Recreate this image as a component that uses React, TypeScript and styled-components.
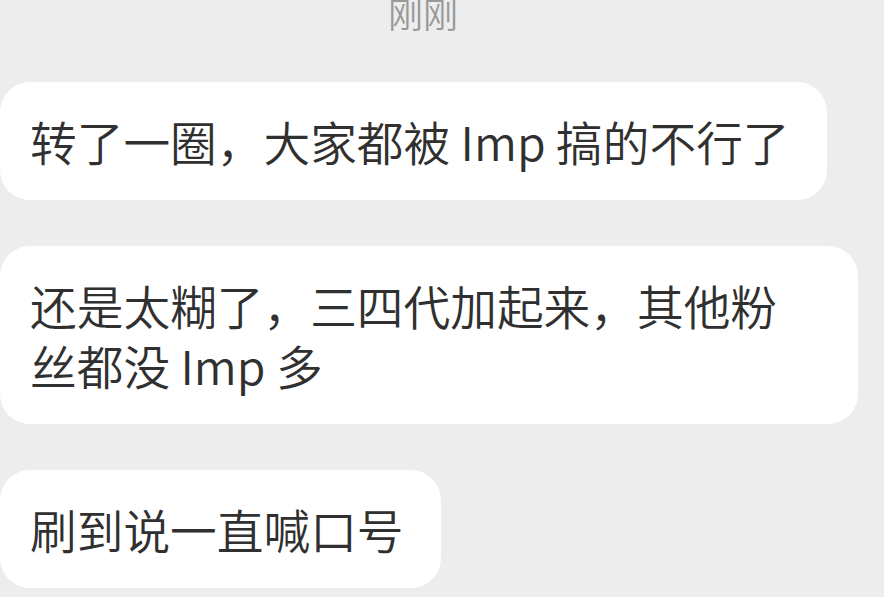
import styled, { createGlobalStyle } from 'styled-components';

const GlobalStyle = createGlobalStyle`
  html, body {
    margin: 0;
    padding: 0;
    background: #ededed;
    overflow: hidden;
  }
  body {
    font-family: "Noto Sans CJK SC", "Noto Sans", sans-serif;
  }
`;

const ChatList = styled.div`
  width: 884px;
  height: 597px;
  display: flex;
  flex-direction: column;
  align-items: flex-start;
  gap: 46px;
  background: #ededed;
  overflow: hidden;
`;

const TimeStamp = styled.div`
  align-self: stretch;
  margin-top: -9px;
  padding-right: 38px;
  height: 45px;
  text-align: center;
  font-size: 35px;
  line-height: 44px;
  font-weight: 350;
  color: #999999;
`;

const Bubble = styled.div`
  box-sizing: border-box;
  max-width: 858px;
  padding: 29px 37px 29px 30px;
  background: #ffffff;
  border-radius: 30px;
  color: #303030;
  font-size: 46.7px;
  line-height: 60px;
  font-weight: 350;
  word-break: break-all;
`;

const messages = [
  '转了一圈，大家都被 Imp 搞的不行了',
  '还是太糊了，三四代加起来，其他粉丝都没 Imp 多',
  '刷到说一直喊口号',
];

export default function App() {
  return (
    <>
      <GlobalStyle />
      <ChatList>
        <TimeStamp>刚刚</TimeStamp>
        {messages.map(text => (
          <Bubble key={text}>{text}</Bubble>
        ))}
      </ChatList>
    </>
  );
}
